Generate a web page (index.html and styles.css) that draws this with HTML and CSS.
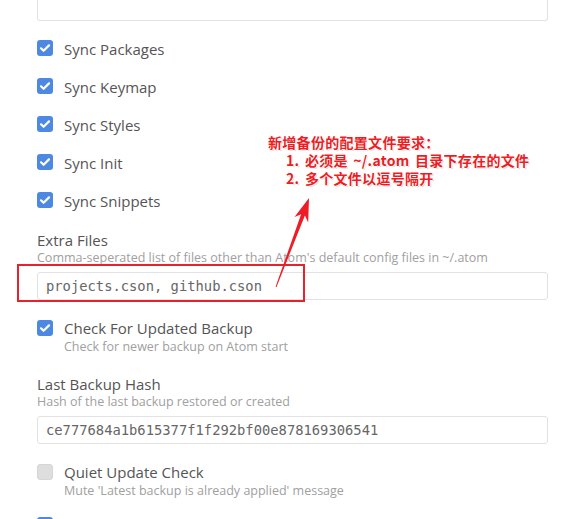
FILE: index.html
```html
<!DOCTYPE html>
<html>
<head>
<meta charset="utf-8">
<link rel="stylesheet" href="styles.css">
</head>
<body>
<div class="panel">
  <div class="top-input"></div>

  <div class="sync-row first-row"><span class="cb on"><svg viewBox="0 0 16 16"><path d="M4 8.3l2.6 2.5L12 5.4"/></svg></span><span class="label">Sync Packages</span></div>
  <div class="sync-row"><span class="cb on"><svg viewBox="0 0 16 16"><path d="M4 8.3l2.6 2.5L12 5.4"/></svg></span><span class="label">Sync Keymap</span></div>
  <div class="sync-row"><span class="cb on"><svg viewBox="0 0 16 16"><path d="M4 8.3l2.6 2.5L12 5.4"/></svg></span><span class="label">Sync Styles</span></div>
  <div class="sync-row"><span class="cb on"><svg viewBox="0 0 16 16"><path d="M4 8.3l2.6 2.5L12 5.4"/></svg></span><span class="label">Sync Init</span></div>
  <div class="sync-row"><span class="cb on"><svg viewBox="0 0 16 16"><path d="M4 8.3l2.6 2.5L12 5.4"/></svg></span><span class="label">Sync Snippets</span></div>

  <div class="field extra">
    <div class="label">Extra Files</div>
    <div class="desc">Comma-seperated list of files other than Atom's default config files in ~/.atom</div>
    <div class="input">projects.cson, github.cson</div>
  </div>

  <div class="check-field first">
    <span class="cb on"><svg viewBox="0 0 16 16"><path d="M4 8.3l2.6 2.5L12 5.4"/></svg></span>
    <div class="check-text">
      <div class="label">Check For Updated Backup</div>
      <div class="desc">Check for newer backup on Atom start</div>
    </div>
  </div>

  <div class="field hash">
    <div class="label">Last Backup Hash</div>
    <div class="desc">Hash of the last backup restored or created</div>
    <div class="input">ce777684a1b615377f1f292bf00e878169306541</div>
  </div>

  <div class="check-field quiet">
    <span class="cb off"></span>
    <div class="check-text">
      <div class="label">Quiet Update Check</div>
      <div class="desc">Mute 'Latest backup is already applied' message</div>
    </div>
  </div>

  <div class="check-field next">
    <span class="cb on"></span>
  </div>
</div>

<div class="note">
  <div class="note-line">新增备份的配置文件要求：</div>
  <div class="note-line indent">1. 必须是 ~/.atom 目录下存在的文件</div>
  <div class="note-line indent">2. 多个文件以逗号隔开</div>
</div>
<div class="red-box"></div>
<svg class="arrow" width="584" height="519" viewBox="0 0 584 519">
  <polygon points="309,198 308.2,222.6 304.9,215.6 276.4,287.2 275.6,286.8 301.1,214.2 294.5,216.9"/>
</svg>
</body>
</html>
```

FILE: styles.css
```css
html, body {
  margin: 0;
  padding: 0;
  background: #ffffff;
}
body {
  width: 584px;
  height: 519px;
  overflow: hidden;
  position: relative;
  font-family: "Open Sans", "Noto Sans", sans-serif;
  color: #555555;
}
.panel {
  padding: 0 36px 0 37px;
}
.top-input {
  height: 20px;
  border: 1px solid #e2e2e2;
  border-top: none;
  border-radius: 0 0 3px 3px;
}
.sync-row {
  display: flex;
  align-items: center;
  height: 38px;
}
.sync-row.first-row {
  margin-top: 8px;
}
.sync-row .label {
  margin-left: 11px;
  margin-top: 2px;
}
.label {
  font-size: 15px;
  line-height: 18px;
  color: #555555;
}
.desc {
  font-size: 12.5px;
  line-height: 18px;
  color: #a0a0a0;
}
.cb {
  flex: none;
  width: 16px;
  height: 16px;
  border-radius: 3px;
  display: flex;
  align-items: center;
  justify-content: center;
  box-sizing: border-box;
}
.cb.on {
  background: #4d88e2;
}
.cb.off {
  background: #dedede;
  border: 1px solid #d6d6d6;
}
.cb svg {
  width: 16px;
  height: 16px;
}
.cb svg path {
  fill: none;
  stroke: #ffffff;
  stroke-width: 2.2;
  stroke-linecap: round;
  stroke-linejoin: round;
}
.field.extra {
  margin-top: 12px;
}
.input {
  margin-top: 5px;
  height: 28px;
  box-sizing: border-box;
  border: 1px solid #e2e2e2;
  border-radius: 3px;
  padding: 0 8px;
  font-family: "DejaVu Sans Mono", monospace;
  font-size: 13.8px;
  line-height: 26px;
  color: #666666;
}
.check-field {
  display: flex;
  align-items: flex-start;
}
.check-field .cb {
  margin-top: 1px;
}
.check-text {
  margin-left: 11px;
}
.check-text .desc {
  line-height: 20px;
}
.check-field.first {
  margin-top: 19px;
}
.field.hash {
  margin-top: 18px;
}
.check-field.quiet {
  margin-top: 19px;
}
.check-field.next {
  margin-top: 15px;
}
.note {
  position: absolute;
  left: 268px;
  top: 133px;
  font-family: "Noto Sans CJK SC", sans-serif;
  font-weight: bold;
  font-size: 14px;
  line-height: 18px;
  word-spacing: 2px;
  letter-spacing: 0.3px;
  color: #ee1c25;
  text-shadow: 1px 0 0 #fff, -1px 0 0 #fff, 0 1px 0 #fff, 0 -1px 0 #fff, 1px 1px 1px #bbb;
  white-space: nowrap;
}
.note-line.indent {
  padding-left: 18px;
}
.red-box {
  position: absolute;
  left: 17px;
  top: 264px;
  width: 284px;
  height: 34px;
  border: 2px solid #e8222a;
}
.arrow {
  position: absolute;
  left: 0;
  top: 0;
}
.arrow polygon {
  fill: #ee1c25;
}
```
